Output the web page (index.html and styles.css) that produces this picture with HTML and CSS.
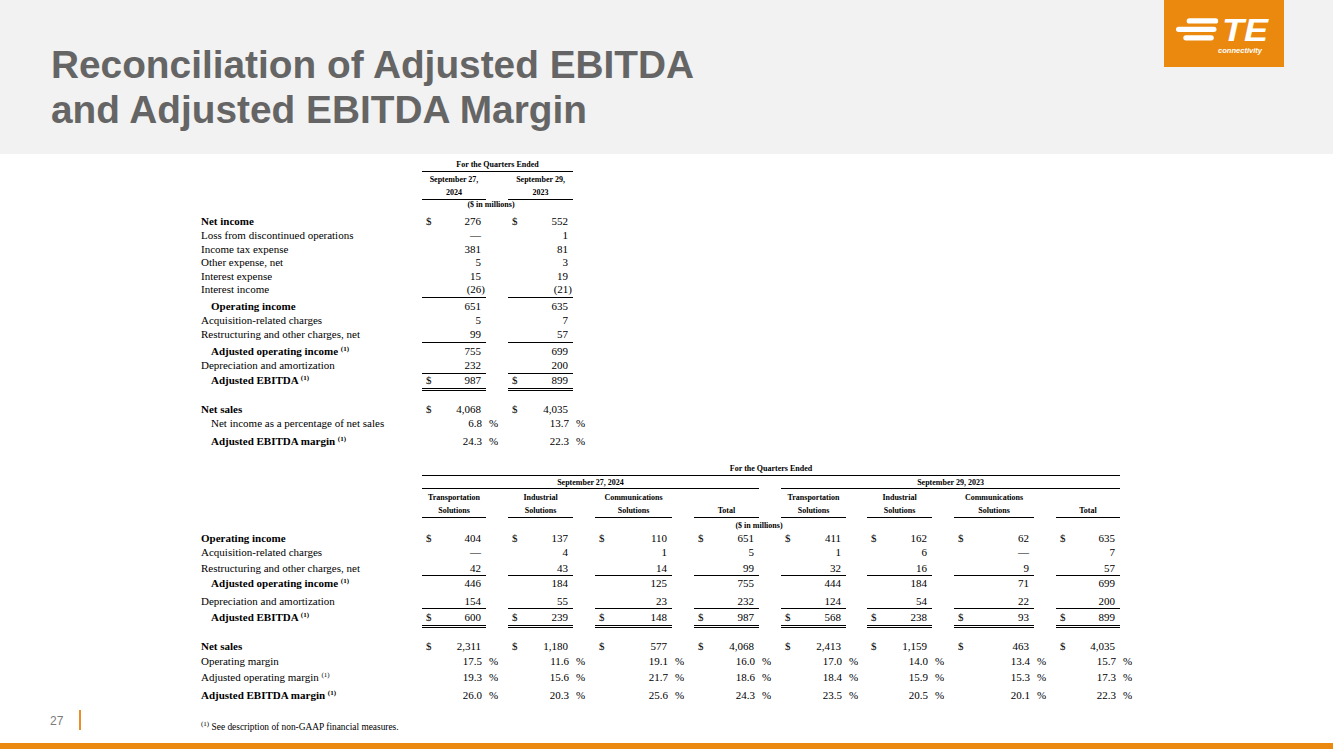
FILE: index.html
```html
<!DOCTYPE html>
<html lang="en">
<head>
<meta charset="utf-8">
<title>Reconciliation of Adjusted EBITDA and Adjusted EBITDA Margin</title>
<link rel="stylesheet" href="styles.css">
</head>
<body>
<header class="band">
  <h1 class="title">Reconciliation of Adjusted EBITDA<br>and Adjusted EBITDA Margin</h1>
  <div class="logo">
    <svg width="120" height="67" viewBox="0 0 120 67" aria-label="TE connectivity">
      <g fill="#fff">
        <rect x="22.7" y="18.3" width="31.5" height="5.2" rx="2.6"/>
        <rect x="12" y="26.7" width="40.5" height="5.2" rx="2.6"/>
        <rect x="19.3" y="35.2" width="30.5" height="5.2" rx="2.6"/>
        <text class="logo-te" x="58" y="41" textLength="46" lengthAdjust="spacingAndGlyphs">TE</text>
        <text class="logo-sub" x="54" y="52.5" textLength="44" lengthAdjust="spacingAndGlyphs">connectivity</text>
      </g>
    </svg>
  </div>
</header>

<main class="content">
  <table class="fin t1">
    <colgroup><col class="w-lbl"><col class="w64"><col class="w22"><col class="w65"><col class="w20"></colgroup>
    <tr class="hd"><td></td><td colspan="3" class="u">For the Quarters Ended</td><td></td></tr>
    <tr class="hd s25"><td></td><td>September 27,</td><td></td><td>September 29,</td><td></td></tr>
    <tr class="hd s1"><td></td><td class="u">2024</td><td></td><td class="u">2023</td><td></td></tr>
    <tr class="hd"><td></td><td colspan="3" class="mil1">($ in millions)</td><td></td></tr>
    <tr class="s47"><td class="b">Net income</td><td class="v"><span class="d">$</span>276</td><td class="p"></td><td class="v"><span class="d">$</span>552</td><td class="p"></td></tr>
    <tr><td>Loss from discontinued operations</td><td class="v">—</td><td class="p"></td><td class="v">1</td><td class="p"></td></tr>
    <tr><td>Income tax expense</td><td class="v">381</td><td class="p"></td><td class="v">81</td><td class="p"></td></tr>
    <tr><td>Other expense, net</td><td class="v">5</td><td class="p"></td><td class="v">3</td><td class="p"></td></tr>
    <tr><td>Interest expense</td><td class="v">15</td><td class="p"></td><td class="v">19</td><td class="p"></td></tr>
    <tr><td>Interest income</td><td class="v u"><span class="neg">(26)</span></td><td class="p"></td><td class="v u"><span class="neg">(21)</span></td><td class="p"></td></tr>
    <tr class="s34"><td class="b ind">Operating income</td><td class="v">651</td><td class="p"></td><td class="v">635</td><td class="p"></td></tr>
    <tr class="s04"><td>Acquisition-related charges</td><td class="v">5</td><td class="p"></td><td class="v">7</td><td class="p"></td></tr>
    <tr class="s04"><td>Restructuring and other charges, net</td><td class="v u">99</td><td class="p"></td><td class="v u">57</td><td class="p"></td></tr>
    <tr class="s34"><td class="b ind">Adjusted operating income <sup class="fn">(1)</sup></td><td class="v">755</td><td class="p"></td><td class="v">699</td><td class="p"></td></tr>
    <tr class="s04"><td>Depreciation and amortization</td><td class="v u">232</td><td class="p"></td><td class="v u">200</td><td class="p"></td></tr>
    <tr class="s1 dbl"><td class="b ind">Adjusted EBITDA <sup class="fn">(1)</sup></td><td class="v u"><span class="d">$</span>987</td><td class="p"></td><td class="v u"><span class="d">$</span>899</td><td class="p"></td></tr>
    <tr class="s134"><td class="b">Net sales</td><td class="v"><span class="d">$</span>4,068</td><td class="p"></td><td class="v"><span class="d">$</span>4,035</td><td class="p"></td></tr>
    <tr><td class="ind">Net income as a percentage of net sales</td><td class="v pc">6.8</td><td class="p">%</td><td class="v pc">13.7</td><td class="p">%</td></tr>
    <tr class="s48"><td class="b ind">Adjusted EBITDA margin <sup class="fn">(1)</sup></td><td class="v pc">24.3</td><td class="p">%</td><td class="v pc">22.3</td><td class="p">%</td></tr>
  </table>

  <table class="fin t2">
    <colgroup>
      <col class="w-lbl">
      <col class="w64"><col class="w22">
      <col class="w65"><col class="w22">
      <col class="w77"><col class="w22">
      <col class="w65"><col class="w22">
      <col class="w65"><col class="w21">
      <col class="w65"><col class="w22">
      <col class="w80"><col class="w22">
      <col class="w64"><col class="w14">
    </colgroup>
    <tr class="hd"><td></td><td colspan="15" class="u">For the Quarters Ended</td><td></td></tr>
    <tr class="hd s27 nopb"><td></td><td colspan="7" class="u">September 27, 2024</td><td></td><td colspan="7" class="u">September 29, 2023</td><td></td></tr>
    <tr class="hd s33"><td></td><td>Transportation</td><td></td><td>Industrial</td><td></td><td>Communications</td><td></td><td></td><td></td><td>Transportation</td><td></td><td>Industrial</td><td></td><td>Communications</td><td></td><td></td><td></td></tr>
    <tr class="hd s15"><td></td><td class="u">Solutions</td><td></td><td class="u">Solutions</td><td></td><td class="u">Solutions</td><td></td><td class="u">Total</td><td></td><td class="u">Solutions</td><td></td><td class="u">Solutions</td><td></td><td class="u">Solutions</td><td></td><td class="u">Total</td><td></td></tr>
    <tr class="hd s3"><td></td><td colspan="15" class="mil2">($ in millions)</td><td></td></tr>
    <tr><td class="b">Operating income</td>
      <td class="v"><span class="d">$</span>404</td><td class="p"></td>
      <td class="v"><span class="d">$</span>137</td><td class="p"></td>
      <td class="v"><span class="d">$</span>110</td><td class="p"></td>
      <td class="v"><span class="d">$</span>651</td><td class="p"></td>
      <td class="v"><span class="d">$</span>411</td><td class="p"></td>
      <td class="v"><span class="d">$</span>162</td><td class="p"></td>
      <td class="v"><span class="d">$</span>62</td><td class="p"></td>
      <td class="v"><span class="d">$</span>635</td><td class="p"></td></tr>
    <tr><td>Acquisition-related charges</td>
      <td class="v">—</td><td class="p"></td>
      <td class="v">4</td><td class="p"></td>
      <td class="v">1</td><td class="p"></td>
      <td class="v">5</td><td class="p"></td>
      <td class="v">1</td><td class="p"></td>
      <td class="v">6</td><td class="p"></td>
      <td class="v">—</td><td class="p"></td>
      <td class="v">7</td><td class="p"></td></tr>
    <tr class="s25"><td>Restructuring and other charges, net</td>
      <td class="v u">42</td><td class="p"></td>
      <td class="v u">43</td><td class="p"></td>
      <td class="v u">14</td><td class="p"></td>
      <td class="v u">99</td><td class="p"></td>
      <td class="v u">32</td><td class="p"></td>
      <td class="v u">16</td><td class="p"></td>
      <td class="v u">9</td><td class="p"></td>
      <td class="v u">57</td><td class="p"></td></tr>
    <tr class="s14"><td class="b ind">Adjusted operating income <sup class="fn">(1)</sup></td>
      <td class="v">446</td><td class="p"></td>
      <td class="v">184</td><td class="p"></td>
      <td class="v">125</td><td class="p"></td>
      <td class="v">755</td><td class="p"></td>
      <td class="v">444</td><td class="p"></td>
      <td class="v">184</td><td class="p"></td>
      <td class="v">71</td><td class="p"></td>
      <td class="v">699</td><td class="p"></td></tr>
    <tr class="s44"><td>Depreciation and amortization</td>
      <td class="v u">154</td><td class="p"></td>
      <td class="v u">55</td><td class="p"></td>
      <td class="v u">23</td><td class="p"></td>
      <td class="v u">232</td><td class="p"></td>
      <td class="v u">124</td><td class="p"></td>
      <td class="v u">54</td><td class="p"></td>
      <td class="v u">22</td><td class="p"></td>
      <td class="v u">200</td><td class="p"></td></tr>
    <tr class="s29 dbl"><td class="b ind">Adjusted EBITDA <sup class="fn">(1)</sup></td>
      <td class="v u"><span class="d">$</span>600</td><td class="p"></td>
      <td class="v u"><span class="d">$</span>239</td><td class="p"></td>
      <td class="v u"><span class="d">$</span>148</td><td class="p"></td>
      <td class="v u"><span class="d">$</span>987</td><td class="p"></td>
      <td class="v u"><span class="d">$</span>568</td><td class="p"></td>
      <td class="v u"><span class="d">$</span>238</td><td class="p"></td>
      <td class="v u"><span class="d">$</span>93</td><td class="p"></td>
      <td class="v u"><span class="d">$</span>899</td><td class="p"></td></tr>
    <tr class="s134"><td class="b">Net sales</td>
      <td class="v"><span class="d">$</span>2,311</td><td class="p"></td>
      <td class="v"><span class="d">$</span>1,180</td><td class="p"></td>
      <td class="v"><span class="d">$</span>577</td><td class="p"></td>
      <td class="v"><span class="d">$</span>4,068</td><td class="p"></td>
      <td class="v"><span class="d">$</span>2,413</td><td class="p"></td>
      <td class="v"><span class="d">$</span>1,159</td><td class="p"></td>
      <td class="v"><span class="d">$</span>463</td><td class="p"></td>
      <td class="v"><span class="d">$</span>4,035</td><td class="p"></td></tr>
    <tr class="s14"><td>Operating margin</td>
      <td class="v pc">17.5</td><td class="p">%</td>
      <td class="v pc">11.6</td><td class="p">%</td>
      <td class="v pc">19.1</td><td class="p">%</td>
      <td class="v pc">16.0</td><td class="p">%</td>
      <td class="v pc">17.0</td><td class="p">%</td>
      <td class="v pc">14.0</td><td class="p">%</td>
      <td class="v pc">13.4</td><td class="p">%</td>
      <td class="v pc">15.7</td><td class="p">%</td></tr>
    <tr class="s24"><td>Adjusted operating margin <sup class="fn">(1)</sup></td>
      <td class="v pc">19.3</td><td class="p">%</td>
      <td class="v pc">15.6</td><td class="p">%</td>
      <td class="v pc">21.7</td><td class="p">%</td>
      <td class="v pc">18.6</td><td class="p">%</td>
      <td class="v pc">18.4</td><td class="p">%</td>
      <td class="v pc">15.9</td><td class="p">%</td>
      <td class="v pc">15.3</td><td class="p">%</td>
      <td class="v pc">17.3</td><td class="p">%</td></tr>
    <tr class="s44"><td class="b">Adjusted EBITDA margin <sup class="fn">(1)</sup></td>
      <td class="v pc">26.0</td><td class="p">%</td>
      <td class="v pc">20.3</td><td class="p">%</td>
      <td class="v pc">25.6</td><td class="p">%</td>
      <td class="v pc">24.3</td><td class="p">%</td>
      <td class="v pc">23.5</td><td class="p">%</td>
      <td class="v pc">20.5</td><td class="p">%</td>
      <td class="v pc">20.1</td><td class="p">%</td>
      <td class="v pc">22.3</td><td class="p">%</td></tr>
  </table>
</main>

<footer class="foot">
  <div class="pg">27</div>
  <div class="vline"></div>
  <p class="note"><sup class="fn">(1)</sup> See description of non-GAAP financial measures.</p>
</footer>
<div class="bar"></div>
</body>
</html>
```

FILE: styles.css
```css
html, body {
  margin: 0;
  padding: 0;
}

body {
  width: 1333px;
  height: 749px;
  overflow: hidden;
  display: flex;
  flex-direction: column;
  background: #ffffff;
  color: #000000;
  font-family: "Liberation Serif", "Times New Roman", serif;
}

/* ---------- header band ---------- */
.band {
  flex-shrink: 0;
  height: 154px;
  background: #f2f2f2;
  display: flex;
  justify-content: space-between;
  align-items: flex-start;
}

.title {
  margin: 0;
  padding: 42px 0 0 51px;
  font-family: "Liberation Sans", Arial, sans-serif;
  font-weight: bold;
  font-size: 38.8px;
  line-height: 45px;
  color: #656565;
}

.logo {
  width: 120px;
  height: 67px;
  margin-right: 49px;
  background: #ea890e;
}

.logo svg {
  display: block;
}

.logo-te {
  font-family: "Liberation Sans", Arial, sans-serif;
  font-weight: bold;
  font-style: italic;
  font-size: 32px;
}

.logo-sub {
  font-family: "Liberation Sans", Arial, sans-serif;
  font-weight: bold;
  font-style: italic;
  font-size: 7.6px;
}

/* ---------- content ---------- */
.content {
  flex: 1 1 0;
  min-height: 0;
  padding: 6.3px 0 0 201px;
}

.fin {
  border-collapse: separate;
  border-spacing: 0;
  table-layout: fixed;
  font-size: 11px;
}

.t1 { width: 392px; }
.t2 { width: 933px; margin-top: 14.2px; }

col.w-lbl { width: 221px; }
col.w14 { width: 14px; }
col.w20 { width: 20px; }
col.w21 { width: 21px; }
col.w22 { width: 22px; }
col.w64 { width: 64px; }
col.w65 { width: 65px; }
col.w77 { width: 77px; }
col.w80 { width: 80px; }

.fin td {
  padding: 0 0 1px 0;
  line-height: 11.6px;
  border-bottom: 1px solid transparent;
  vertical-align: bottom;
  white-space: nowrap;
}

.fin td.v {
  text-align: right;
  padding-right: 5px;
  padding-left: 4px;
}

.fin td.v.pc {
  padding-right: 4px;
}

.fin td.p {
  text-align: left;
  padding-left: 3px;
}

.fin td.u {
  border-bottom-color: #000000;
}

.fin td.b { font-weight: bold; }
.fin td.ind { padding-left: 10px; }

.d { float: left; }
.neg { margin-right: -4px; }

.fn {
  font-size: 7px;
  line-height: 0;
  vertical-align: 4px;
  font-weight: normal;
}

.fin td.b .fn { font-weight: bold; }

/* header rows */
.fin tr.hd > td {
  font-size: 8px;
  font-weight: bold;
  line-height: 10px;
  text-align: center;
}

.fin td.mil1 { padding-right: 13px; }
.fin td.mil2 { padding-right: 24px; }

/* double rule row */
.fin tr.dbl > td {
  border-bottom-width: 3px;
  border-bottom-style: double;
}

.fin tr.nopb > td { padding-bottom: 0; }

/* row spacing */
.fin tr.s04 > td { padding-top: 0.4px; }
.fin tr.s1 > td { padding-top: 1px; }
.fin tr.s14 > td { padding-top: 1.4px; }
.fin tr.s15 > td { padding-top: 1.5px; }
.fin tr.s24 > td { padding-top: 2.4px; }
.fin tr.s25 > td { padding-top: 2.5px; }
.fin tr.s27 > td { padding-top: 2.7px; }
.fin tr.s29 > td { padding-top: 2.9px; }
.fin tr.s3 > td { padding-top: 3px; }
.fin tr.s33 > td { padding-top: 3.3px; }
.fin tr.s34 > td { padding-top: 3.4px; }
.fin tr.s44 > td { padding-top: 4.4px; }
.fin tr.s47 > td { padding-top: 4.7px; }
.fin tr.s48 > td { padding-top: 4.8px; }
.fin tr.s134 > td { padding-top: 13.4px; }

/* ---------- footer ---------- */
.foot {
  flex-shrink: 0;
  height: 40px;
  display: flex;
  align-items: flex-start;
}

.pg {
  width: 29px;
  margin: 9.8px 0 0 50px;
  font-family: "Liberation Sans", Arial, sans-serif;
  font-size: 12px;
  line-height: 16px;
  color: #7b7b7b;
}

.vline {
  width: 2px;
  height: 20px;
  margin-top: 7px;
  background: #ea8f2a;
}

.note {
  margin: 19.3px 0 0 120px;
  font-size: 9.4px;
  line-height: 11px;
}

.bar {
  flex-shrink: 0;
  height: 6px;
  background: #ea890e;
}
```
